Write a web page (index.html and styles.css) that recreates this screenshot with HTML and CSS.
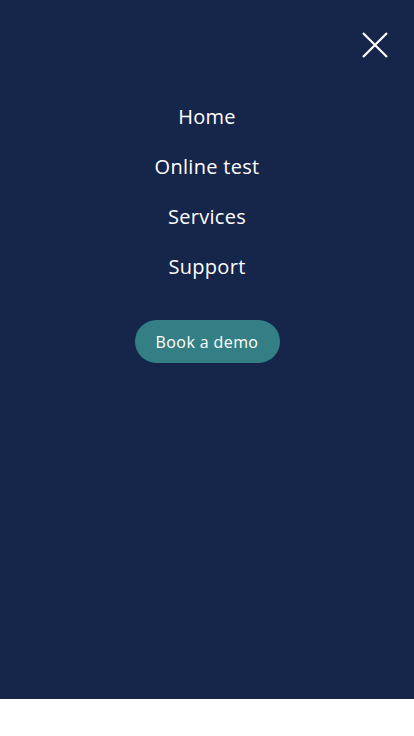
FILE: index.html
```html
<!DOCTYPE html>
<html lang="en">
<head>
    <meta charset="UTF-8">
    <meta name="viewport" content="width=device-width, initial-scale=1.0">
    <title>Menu</title>
    <link rel="stylesheet" href="styles.css">
</head>
<body>

    <div class="menu">
        <div class="menu-top">
            <button class="close-btn" aria-label="Close menu">
                <svg width="28" height="28" viewBox="0 0 28 28">
                    <path d="M2 2 L26 26 M26 2 L2 26" stroke="#fff" stroke-width="2.2" fill="none"/>
                </svg>
            </button>
        </div>

        <nav class="menu-links">
            <a href="#">Home</a>
            <a href="#">Online test</a>
            <a href="#">Services</a>
            <a href="#">Support</a>
        </nav>

        <a href="#" class="demo-btn">Book a demo</a>
    </div>

</body>
</html>
```

FILE: styles.css
```css
body {
    font-family: 'Open Sans', sans-serif;
    margin: 0;
    padding: 0;
    background-color: #fff;
}

.menu {
    background-color: #16264a;
    height: 699px;
    display: flex;
    flex-direction: column;
    align-items: center;
    box-sizing: border-box;
    padding: 31px 25px 0 25px;
}

.menu-top {
    width: 100%;
    display: flex;
    justify-content: flex-end;
}

.close-btn {
    background: none;
    border: none;
    padding: 0;
    width: 28px;
    height: 28px;
    cursor: pointer;
}

.close-btn svg {
    display: block;
}

.menu-links {
    display: flex;
    flex-direction: column;
    align-items: center;
    gap: 22px;
    margin-top: 44px;
}

.menu-links a {
    color: #fff;
    text-decoration: none;
    font-size: 20px;
    line-height: 28px;
    letter-spacing: 0.3px;
}

.demo-btn {
    margin-top: 39px;
    background-color: #347f85;
    color: #fff;
    text-decoration: none;
    font-size: 16px;
    letter-spacing: 0.4px;
    height: 43px;
    width: 145px;
    border-radius: 22px;
    display: flex;
    align-items: center;
    justify-content: center;
}
```
